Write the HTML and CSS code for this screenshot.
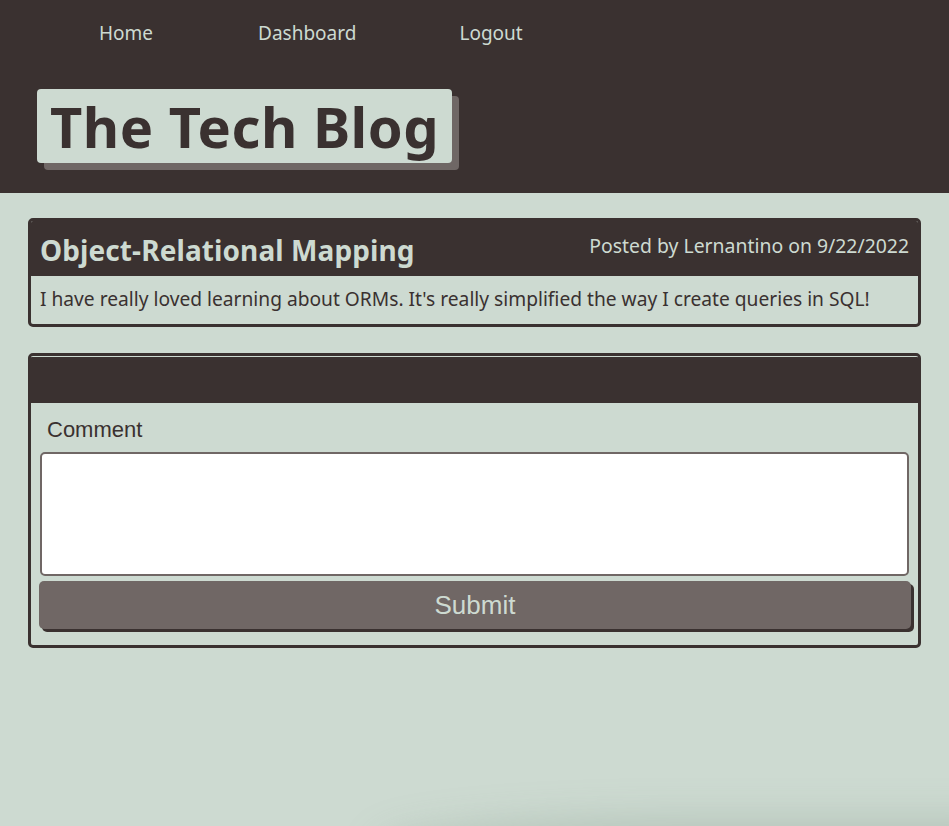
FILE: index.html
```html
<!DOCTYPE html>
<html lang="en">
<head>
<meta charset="utf-8">
<title>The Tech Blog</title>
<link rel="stylesheet" href="styles.css">
</head>
<body>
<header class="site-header">
  <nav class="nav">
    <a class="nav-link" href="#">Home</a>
    <a class="nav-link" href="#">Dashboard</a>
    <a class="nav-link" href="#">Logout</a>
  </nav>
  <div class="brand-wrap">
    <h1 class="brand">The Tech Blog</h1>
  </div>
</header>
<main class="main">
  <article class="card post">
    <div class="card-head post-head">
      <h2 class="post-title">Object-Relational Mapping</h2>
      <span class="post-meta">Posted by Lernantino on 9/22/2022</span>
    </div>
    <div class="post-body">I have really loved learning about ORMs. It's really simplified the way I create queries in SQL!</div>
  </article>
  <section class="card comment-card">
    <div class="card-head comment-head"></div>
    <form class="comment-form">
      <label class="comment-label" for="comment">Comment</label>
      <textarea class="comment-input" id="comment"></textarea>
      <button class="submit-btn" type="button">Submit</button>
    </form>
  </section>
</main>
<div class="edge-shadow"></div>
</body>
</html>
```

FILE: styles.css
```css
* { box-sizing: border-box; }
html, body { margin: 0; padding: 0; }
body {
  background: #cddad1;
  font-family: "Noto Sans", "Open Sans", sans-serif;
  color: #3a3130;
  min-height: 826px;
  overflow: hidden;
}
.site-header {
  background: #3a3130;
  height: 193px;
  padding-top: 19px;
}
.nav {
  display: flex;
  padding-left: 99px;
}
.nav-link {
  color: #cddad1;
  text-decoration: none;
  font-size: 19px;
  line-height: 28px;
}
.nav-link:nth-child(1) { margin-right: 105px; }
.nav-link:nth-child(2) { margin-right: 103px; }
.brand-wrap {
  padding-left: 37px;
  margin-top: 42px;
}
.brand {
  display: inline-block;
  margin: 0;
  background: #cddad1;
  color: #3a3130;
  font-size: 56px;
  font-weight: 700;
  line-height: 74px;
  height: 74px;
  padding: 0 13px;
  border-radius: 4px;
  box-shadow: 7px 7px 0 #6f6765;
  letter-spacing: 0.5px;
}
.main {
  padding: 25px 28px 0 28px;
  display: flex;
  flex-direction: column;
  gap: 26px;
}
.card {
  border: 3px solid #3a3130;
  border-radius: 5px;
  overflow: hidden;
}
.card-head { background: #3a3130; }
.post-head {
  height: 55px;
  display: flex;
  justify-content: space-between;
  align-items: flex-start;
  padding: 0 9px;
}
.post-title {
  margin: 0;
  color: #cddad1;
  font-size: 28px;
  font-weight: 700;
  line-height: 58px;
  letter-spacing: 0.1px;
}
.post-meta {
  color: #cddad1;
  font-size: 19.4px;
  line-height: 50px;
}
.post-body {
  font-size: 19.2px;
  line-height: 46px;
  padding: 0 9px;
  height: 48px;
}
.comment-head {
  height: 47px;
  border-top: 1px solid #cddad1;
}
.comment-form {
  display: flex;
  flex-direction: column;
  padding: 14px 9px 16px 8px;
}
.comment-label {
  font-family: "Liberation Sans", Arial, sans-serif;
  font-size: 22px;
  line-height: 26px;
  padding-left: 8px;
  margin-bottom: 9px;
}
.comment-input {
  margin: 0 0 0 1px;
  height: 124px;
  background: #fff;
  border: 2px solid #706765;
  border-radius: 5px;
  resize: none;
  width: calc(100% - 1px);
}
.submit-btn {
  margin-top: 5px;
  height: 48px;
  width: calc(100% + 2px);
  background: #706765;
  color: #cddad1;
  border: none;
  border-radius: 5px;
  box-shadow: 3px 3px 0 #3a3130;
  font-family: "Liberation Sans", Arial, sans-serif;
  font-size: 26px;
  padding: 0;
}
.edge-shadow {
  position: fixed;
  left: 380px;
  right: -40px;
  bottom: -60px;
  height: 60px;
  box-shadow: 0 -8px 36px rgba(140, 160, 145, 0.35);
  border-radius: 50% 0 0 0;
  pointer-events: none;
}
```
